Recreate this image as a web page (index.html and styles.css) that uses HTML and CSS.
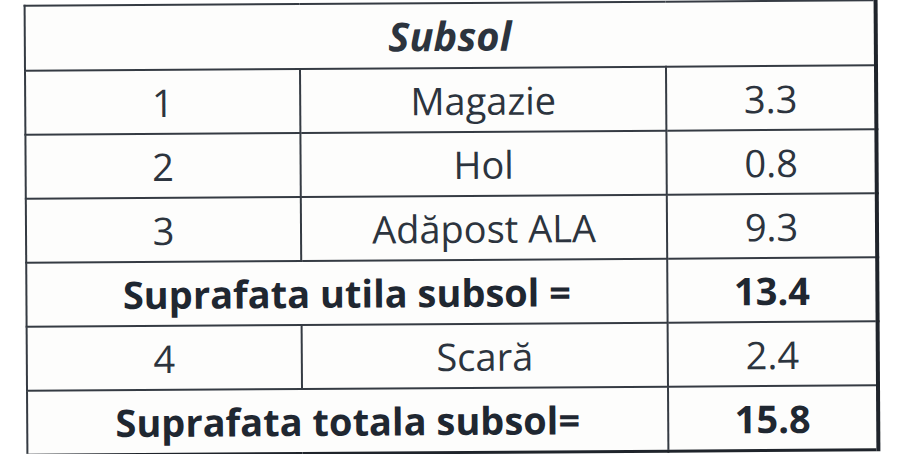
FILE: index.html
```html
<!DOCTYPE html>
<html lang="ro">
<head>
<meta charset="utf-8">
<title>Subsol</title>
<link rel="stylesheet" href="styles.css">
</head>
<body>
<div class="sheet">
  <table class="areas">
    <colgroup>
      <col class="c-nr">
      <col class="c-name">
      <col class="c-val">
    </colgroup>
    <tr class="row head-row"><th colspan="3" class="title">Subsol</th></tr>
    <tr class="row"><td>1</td><td>Magazie</td><td>3.3</td></tr>
    <tr class="row"><td>2</td><td>Hol</td><td>0.8</td></tr>
    <tr class="row"><td>3</td><td>Adăpost ALA</td><td>9.3</td></tr>
    <tr class="row sum"><td colspan="2">Suprafata utila subsol =</td><td>13.4</td></tr>
    <tr class="row"><td>4</td><td>Scară</td><td>2.4</td></tr>
    <tr class="row sum last"><td colspan="2">Suprafata totala subsol=</td><td>15.8</td></tr>
  </table>
</div>
</body>
</html>
```
FILE: styles.css
```css
html, body {
  margin: 0;
  padding: 0;
  background: #ffffff;
}
body {
  width: 900px;
  height: 454px;
  overflow: hidden;
}
.sheet {
  padding: 2px 0 0 25px;
}
.areas {
  border-collapse: collapse;
  width: 851px;
  table-layout: fixed;
  background: #fdfdfc;
  color: #2c343e;
  font-family: "Open Sans", "Liberation Sans", sans-serif;
  font-size: 38px;
  transform: rotate(-0.36deg);
  transform-origin: 50% 50%;
  border-top: 2px solid #2a3038;
  border-left: 2px solid #2a3038;
  border-right: 4px solid #1f242b;
  border-bottom: 3px solid #1f242b;
}
.c-nr { width: 275px; }
.c-name { width: 366px; }
.c-val { width: 210px; }
.areas td, .areas th {
  border: 2px solid #353b43;
  text-align: center;
  vertical-align: middle;
  padding: 0;
  line-height: 1;
}
.row { height: 64px; }
.head-row { height: 65px; }
.title {
  font-style: italic;
  font-weight: 700;
  font-size: 40px;
}
.sum td {
  font-weight: 700;
  color: #1f2731;
}
```
